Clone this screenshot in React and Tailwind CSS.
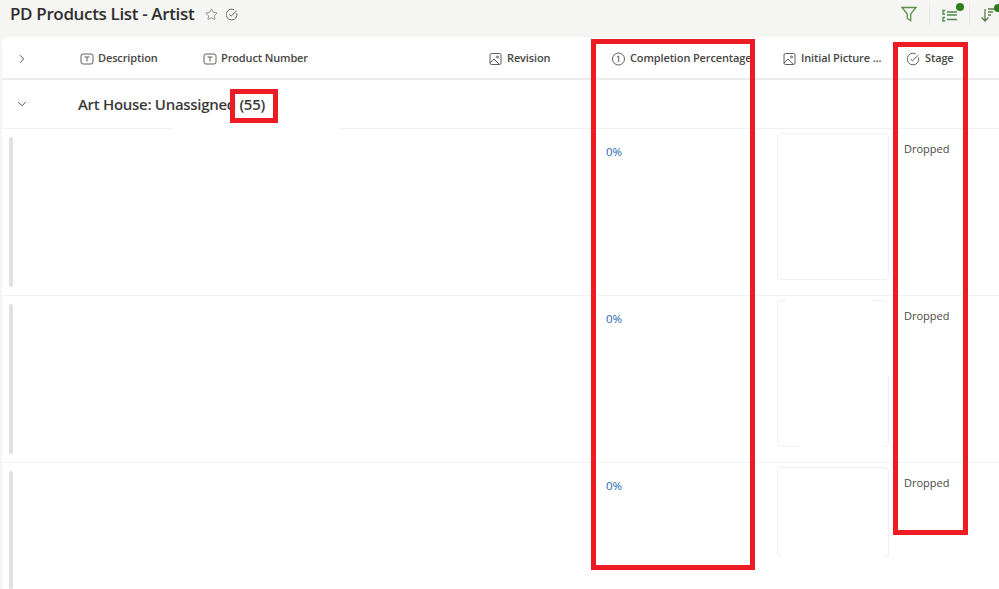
import React from 'react';
import { ChevronRight, ChevronDown, Star } from 'lucide-react';

const gridCols = 'grid grid-cols-[72px_123px_286px_123px_171px_124px_1fr]';

const TextIcon = () => (
  <svg width="14" height="14" viewBox="0 0 14 14" fill="none" stroke="#605e5c" strokeWidth="1" className="shrink-0">
    <rect x="1" y="2" width="12" height="10" rx="2" />
    <path d="M4.5 5h5M7 5v4.5" />
  </svg>
);

const ImageIcon = () => (
  <svg width="14" height="14" viewBox="0 0 14 14" fill="none" stroke="#605e5c" strokeWidth="1" className="shrink-0">
    <rect x="1" y="1.5" width="11" height="11" rx="1.5" />
    <circle cx="8.5" cy="5" r="1" />
    <path d="M1 11l4-4 5.5 5.5" />
  </svg>
);

const NumberIcon = () => (
  <svg width="14" height="14" viewBox="0 0 14 14" fill="none" stroke="#605e5c" strokeWidth="1" className="shrink-0">
    <circle cx="6.5" cy="7" r="6" />
    <path d="M5 5.2L6.7 4v6" />
  </svg>
);

const CheckIcon = ({ size = 14, color = '#605e5c' }) => (
  <svg width={size} height={size} viewBox="0 0 14 14" fill="none" stroke={color} strokeWidth="1" className="shrink-0">
    <path d="M11.6 5.6A5.8 5.8 0 1 1 8.8 2" />
    <path d="M3.5 6.8l2 2L11.5 3" />
  </svg>
);

const HeaderCell = ({ icon, label }) => (
  <div className="flex items-center gap-1 pl-1.5">
    {icon}
    <span className="whitespace-nowrap">{label}</span>
  </div>
);

const rows = [
  { height: 'h-[167px]', bar: 'h-[150px]', box: 'h-[147px]', erase: null },
  { height: 'h-[167px]', bar: 'h-[150px]', box: 'h-[147px]', erase: 'patchy' },
  { height: 'h-[126px]', bar: 'h-[118px]', box: 'h-[90px]', erase: 'bottom' },
];

function Row({ row, last }) {
  return (
    <div className={`${gridCols} ${row.height} ${last ? '' : 'border-b border-[#f3f2f1]'}`}>
      <div className="pl-[7px] pt-2">
        <div className={`w-1 ${row.bar} rounded-sm bg-[#e1e1df]`} />
      </div>
      <div />
      <div />
      <div />
      <div className="pt-[15px] text-[11.5px] leading-4 text-[#1e66b4]">0%</div>
      <div className="pt-1">
        <div className={`relative w-[112px] ${row.box} rounded-sm border border-[#efefef]`}>
          {row.erase === 'patchy' && (
            <>
              <div className="absolute -top-px left-2 w-[85px] h-px bg-white" />
              <div className="absolute -bottom-px left-[22px] w-[82px] h-px bg-white" />
              <div className="absolute -right-px top-0 h-[75px] w-px bg-white" />
            </>
          )}
          {row.erase === 'bottom' && (
            <div className="absolute -bottom-px left-1 w-[102px] h-px bg-white" />
          )}
        </div>
      </div>
      <div className="pl-[3px] pt-3 text-[11px] leading-4 text-[#4a4846]">Dropped</div>
    </div>
  );
}

export default function App() {
  return (
    <div className="relative w-[999px] h-[589px] overflow-hidden bg-[#f5f5f4] font-['Open_Sans','Noto_Sans',sans-serif] text-[#323130]">
      <div className="flex items-center justify-between h-[37px] pb-[9px] pl-2.5">
        <div className="flex items-center">
          <h1 className="text-[17px] leading-6 font-semibold tracking-[-0.35px] text-[#2f2e2d]">PD Products List - Artist</h1>
          <Star size={13} strokeWidth={1.2} className="ml-[11px] text-[#605e5c]" />
          <div className="ml-2">
            <CheckIcon size={13} />
          </div>
        </div>
        <div className="flex items-center h-[22px]">
          <svg width="16" height="16" viewBox="0 0 16 16" fill="none" stroke="#5f8f4e" strokeWidth="1.3" className="mr-[12px]">
            <path d="M1 1.5h14L9.7 8v6.5L6.3 12.5V8z" />
          </svg>
          <div className="w-px h-[22px] bg-[#e8e8e6]" />
          <div className="relative w-[39px] flex justify-center">
            <svg width="16" height="14" viewBox="0 0 16 14" fill="none" stroke="#4f8a45" strokeWidth="1.3" className="mt-1">
              <path d="M3 1.5H1V5h2M3 8.5H1V12h2M5 3h10M5 6h10M5 10.5h10" />
            </svg>
            <div className="absolute right-[5px] -top-0.5 w-2 h-2 rounded-full bg-[#2f7d1f]" />
          </div>
          <div className="w-px h-[22px] bg-[#e8e8e6]" />
          <div className="relative w-[29px] flex justify-end pr-[3px]">
            <svg width="16" height="16" viewBox="0 0 16 16" fill="none" stroke="#5b7f45" strokeWidth="1.3">
              <path d="M5 3v12M1.5 11.5L5 15l3.5-3.5M8 3h7M8 6h5M8 9h3" />
            </svg>
            <div className="absolute -right-[3px] -top-0.5 w-2 h-2 rounded-full bg-[#2f7d1f]" />
          </div>
        </div>
      </div>

      <div className="ml-0.5 h-[552px] rounded-tl-md bg-white overflow-hidden">
        <div className={`${gridCols} h-[43px] pt-0.5 items-center border-b-2 border-[#ececec] text-[11px] font-semibold tracking-[-0.13px] text-[#484644]`}>
          <div className="pl-[13px]">
            <ChevronRight size={14} strokeWidth={1.7} className="text-[#55534f]" />
          </div>
          <HeaderCell icon={<TextIcon />} label="Description" />
          <HeaderCell icon={<TextIcon />} label="Product Number" />
          <HeaderCell icon={<ImageIcon />} label="Revision" />
          <HeaderCell icon={<NumberIcon />} label="Completion Percentage" />
          <HeaderCell icon={<ImageIcon />} label="Initial Picture ..." />
          <HeaderCell icon={<CheckIcon />} label="Stage" />
        </div>

        <div className="relative flex items-center h-[49px] border-b border-[#f0f0ef]">
          <ChevronDown size={14} strokeWidth={1.7} className="ml-[13px] text-[#55534f]" />
          <span className="ml-[49px] text-[15px] font-semibold tracking-[-0.3px] whitespace-nowrap text-[#3b3a39]">Art House: Unassigned (55)</span>
          <div className="absolute left-[170px] -bottom-px w-[168px] h-px bg-white" />
        </div>

        {rows.map((row, i) => (
          <Row key={i} row={row} last={i === rows.length - 1} />
        ))}
      </div>

      <div className="absolute left-[230px] top-[89px] w-[48px] h-[34px] border-[5px] border-[#ed1c24]" />
      <div className="absolute left-[591px] top-[39px] w-[164px] h-[531px] border-[5px] border-[#ed1c24]" />
      <div className="absolute left-[893px] top-[42px] w-[75px] h-[493px] border-[5px] border-[#ed1c24]" />
    </div>
  );
}
